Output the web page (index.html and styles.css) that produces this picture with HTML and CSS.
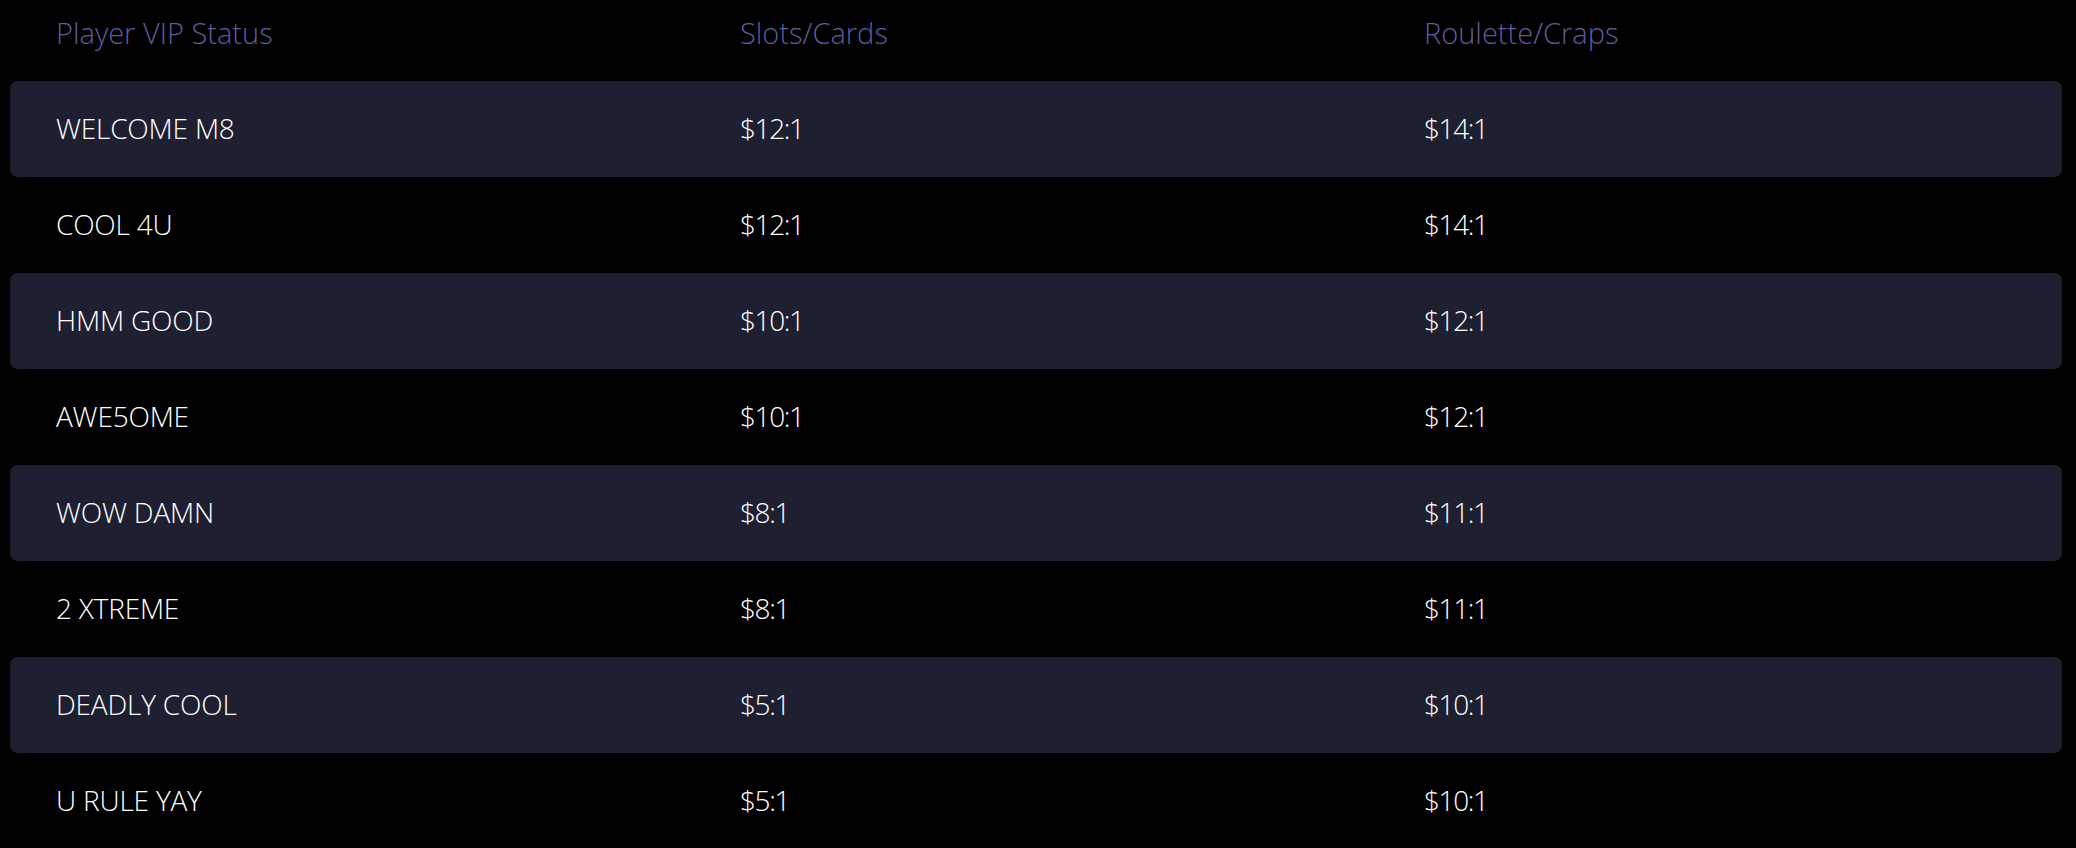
FILE: index.html
```html
<!DOCTYPE html>
<html>
<head>
<meta charset="utf-8">
<link rel="stylesheet" href="styles.css">
</head>
<body>
<div class="table">
  <div class="row head">
    <div class="cell">Player VIP Status</div>
    <div class="cell">Slots/Cards</div>
    <div class="cell">Roulette/Craps</div>
  </div>
  <div class="row striped">
    <div class="cell">WELCOME M8</div><div class="cell num">$12:1</div><div class="cell num">$14:1</div>
  </div>
  <div class="row">
    <div class="cell">COOL 4U</div><div class="cell num">$12:1</div><div class="cell num">$14:1</div>
  </div>
  <div class="row striped">
    <div class="cell">HMM GOOD</div><div class="cell num">$10:1</div><div class="cell num">$12:1</div>
  </div>
  <div class="row">
    <div class="cell">AWE5OME</div><div class="cell num">$10:1</div><div class="cell num">$12:1</div>
  </div>
  <div class="row striped">
    <div class="cell">WOW DAMN</div><div class="cell num">$8:1</div><div class="cell num">$11:1</div>
  </div>
  <div class="row">
    <div class="cell">2 XTREME</div><div class="cell num">$8:1</div><div class="cell num">$11:1</div>
  </div>
  <div class="row striped">
    <div class="cell">DEADLY COOL</div><div class="cell num">$5:1</div><div class="cell num">$10:1</div>
  </div>
  <div class="row">
    <div class="cell">U RULE YAY</div><div class="cell num">$5:1</div><div class="cell num">$10:1</div>
  </div>
</div>
</body>
</html>
```
FILE: styles.css
```css
html, body {
  margin: 0;
  padding: 0;
  background: #000;
}
body {
  padding: 0 14px 0 10px;
  font-family: "Open Sans", "Noto Sans", sans-serif;
  color: #ffffff;
  overflow: hidden;
  height: 848px;
}
.table {
  display: flex;
  flex-direction: column;
}
.row {
  display: grid;
  grid-template-columns: repeat(3, 1fr);
  align-items: center;
  height: 96px;
  border-radius: 8px;
  font-size: 28px;
  font-weight: 300;
  letter-spacing: -0.2px;
  line-height: 1;
}
.row.head {
  height: 66px;
  margin-bottom: 15px;
  color: #5d5c9c;
  font-size: 29px;
  letter-spacing: 0;
}
.row.striped {
  background: #1e1f31;
}
.cell {
  padding-left: 46px;
  padding-bottom: 2px;
  white-space: nowrap;
}
.cell.num {
  letter-spacing: -1.4px;
}
```
